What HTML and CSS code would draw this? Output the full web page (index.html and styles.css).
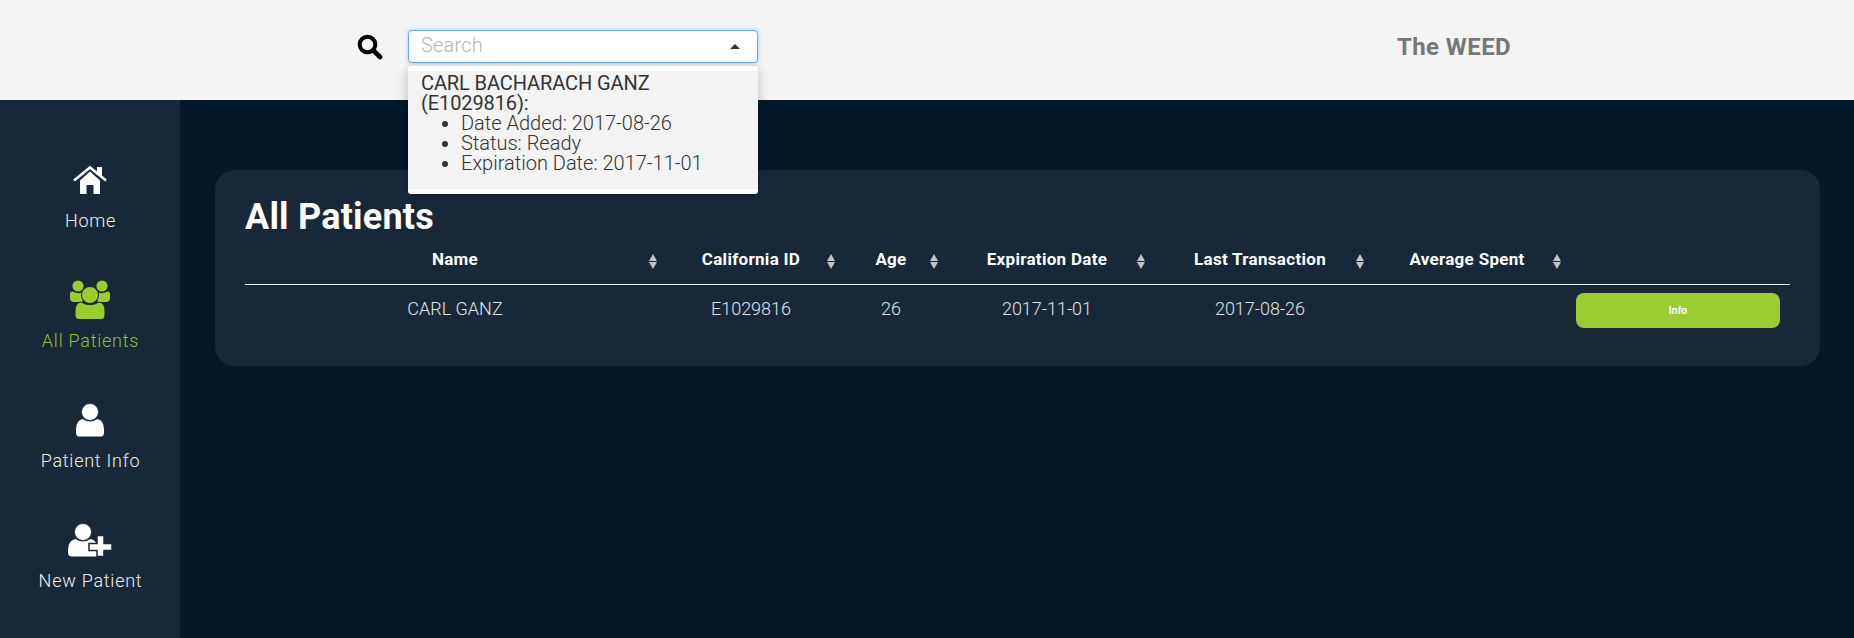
FILE: index.html
```html
<!DOCTYPE html>
<html>
<head>
    <title>The WEED</title>
    <link rel="stylesheet" href="styles.css">
</head>
<body>
    <header class="topbar">
        <svg class="search-icon" viewBox="0 0 26 26" width="26" height="26">
            <circle cx="10.5" cy="10.5" r="7.8" fill="none" stroke="#000" stroke-width="4"/>
            <path d="M16.5 16.5L23 23" stroke="#000" stroke-width="4.6" stroke-linecap="round"/>
        </svg>
        <div class="search-box">
            <div class="search-input">
                <span>Search</span>
                <i class="caret"></i>
            </div>
            <div class="search-menu">
                <div class="search-result">
                    <div class="result-name">CARL BACHARACH GANZ (E1029816):</div>
                    <ul>
                        <li>Date Added: 2017-08-26</li>
                        <li>Status: Ready</li>
                        <li>Expiration Date: 2017-11-01</li>
                    </ul>
                </div>
            </div>
        </div>
        <div class="brand">The WEED</div>
    </header>
    <div class="page">
        <nav class="sidebar">
            <a class="nav-item">
                <svg viewBox="0 0 34 28" width="34" height="28">
                    <path d="M7 14.5L17 5.5L27 14.5V28H20.5V19H13.5V28H7Z" fill="#fff"/>
                    <path d="M1 14.5L17 1.5L33 14.5" fill="none" stroke="#fff" stroke-width="2.6"/>
                    <path d="M24 1H29V10.5L24 6.5Z" fill="#fff"/>
                </svg>
                <span>Home</span>
            </a>
            <a class="nav-item active">
                <svg viewBox="0 0 42 40" width="42" height="40">
                    <circle cx="9" cy="6" r="5.6" fill="#9acd32"/>
                    <circle cx="33" cy="6" r="5.6" fill="#9acd32"/>
                    <path d="M1 14Q1 11.500 3.500 11.500Q9 14.500 13 12.500L13.500 22H5Q1 22 1 18Z" fill="#9acd32"/>
                    <path d="M41 14Q41 11.500 38.500 11.500Q33 14.500 29 12.500L28.500 22H37Q41 22 41 18Z" fill="#9acd32"/>
                    <path d="M6 31Q6 23 12 22Q21 27.500 30 22Q36 23 36 31V35Q36 39.500 32 39.500H10Q6 39.500 6 35Z" fill="#9acd32" stroke="#192838" stroke-width="1"/>
                    <circle cx="21" cy="15" r="8.500" fill="#9acd32" stroke="#192838" stroke-width="1"/>
                </svg>
                <span>All Patients</span>
            </a>
            <a class="nav-item">
                <svg viewBox="0 0 28 33" width="28" height="33">
                    <path d="M0 26Q0 17 6.500 15.500Q14 20.500 21.500 15.500Q28 17 28 26V29Q28 33 25 33H3Q0 33 0 29Z" fill="#fff"/>
                    <circle cx="14" cy="8.500" r="8.500" fill="#fff" stroke="#192838" stroke-width="0.8"/>
                </svg>
                <span>Patient Info</span>
            </a>
            <a class="nav-item">
                <svg viewBox="0 0 46 33" width="46" height="33">
                    <path d="M1 26Q1 17 8.500 15.500Q16 20.500 23.500 15.500Q30 17 30 24V33H5Q1 33 1 29Z" fill="#fff"/>
                    <circle cx="16" cy="8.500" r="8.500" fill="#fff" stroke="#192838" stroke-width="0.8"/>
                    <path d="M30 12H37V20H45V27H37V33H30V27H22V20H30Z" fill="#fff" stroke="#192838" stroke-width="1.500"/>
                </svg>
                <span>New Patient</span>
            </a>
        </nav>
        <main class="content">
            <section class="card">
                <h1>All Patients</h1>
                <table class="patients">
                    <colgroup>
                        <col class="col-name">
                        <col class="col-id">
                        <col class="col-age">
                        <col class="col-exp">
                        <col class="col-last">
                        <col class="col-avg">
                        <col>
                    </colgroup>
                    <thead>
                        <tr>
                            <th class="sortable">Name</th>
                            <th class="sortable">California ID</th>
                            <th class="sortable">Age</th>
                            <th class="sortable">Expiration Date</th>
                            <th class="sortable">Last Transaction</th>
                            <th class="sortable">Average Spent</th>
                            <th></th>
                        </tr>
                    </thead>
                    <tbody>
                        <tr>
                            <td>CARL GANZ</td>
                            <td>E1029816</td>
                            <td>26</td>
                            <td>2017-11-01</td>
                            <td>2017-08-26</td>
                            <td></td>
                            <td class="action"><button class="info-btn">Info</button></td>
                        </tr>
                    </tbody>
                </table>
            </section>
        </main>
    </div>
</body>
</html>
```

FILE: styles.css
```css
html, body {
    height: 100%;
}
body {
    margin: 0;
    font-family: Roboto, "Noto Sans", sans-serif;
    font-weight: 300;
    background-color: #041827;
    color: #ddd;
    overflow: hidden;
}

/* top bar */
.topbar {
    height: 100px;
    background-color: #f4f4f4;
    display: flex;
    align-items: center;
    padding-left: 357px;
    position: relative;
    z-index: 2;
}
.search-icon {
    margin-right: 25px;
    margin-top: -6px;
}
.search-box {
    width: 350px;
    position: relative;
    margin-top: -7px;
}
.search-input {
    height: 33px;
    box-sizing: border-box;
    background-color: #fff;
    border: 1px solid #66afe9;
    border-radius: 4px;
    box-shadow: 0 0 4px rgba(102, 175, 233, 0.6);
    padding: 0 12px 3px;
    display: flex;
    align-items: center;
    justify-content: space-between;
    font-size: 20px;
    letter-spacing: 0.2px;
    color: #b5b5b5;
}
.caret {
    width: 0;
    height: 0;
    border-left: 5px solid transparent;
    border-right: 5px solid transparent;
    border-bottom: 5px solid #333;
    margin-right: 5px;
    margin-top: 3px;
}
.search-menu {
    position: absolute;
    top: 36px;
    left: 0;
    right: 0;
    background-color: #fff;
    border-radius: 3px;
    padding: 5px 0;
    box-shadow: 0 3px 12px rgba(0, 0, 0, 0.25);
}
.search-result {
    background-color: #f3f3f3;
    color: #333;
    font-size: 20px;
    line-height: 20px;
    padding: 2px 13px 16px;
}
.search-result ul {
    margin: 0;
    padding-left: 40px;
}
.result-name {
    width: 270px;
    font-weight: 400;
    letter-spacing: -0.1px;
}
.brand {
    position: absolute;
    left: 1397px;
    width: 114px;
    top: 33px;
    text-align: center;
    font-size: 24px;
    font-weight: 700;
    letter-spacing: 0.4px;
    color: #777;
    white-space: nowrap;
}

/* page */
.page {
    display: flex;
    height: 538px;
}
.sidebar {
    width: 180px;
    flex-shrink: 0;
    background-color: #192838;
    padding-top: 60px;
    box-sizing: border-box;
}
.nav-item {
    height: 120px;
    display: flex;
    flex-direction: column;
    align-items: center;
    color: #f0f0f0;
    font-size: 18px;
    letter-spacing: 0.75px;
    text-align: center;
}
.nav-item span {
    padding-left: 1px;
}
.nav-item svg {
    height: 40px;
    margin-bottom: 10px;
}
.nav-item.active {
    color: #8cc02f;
}

.content {
    flex: 1;
    padding: 70px 34px 0 35px;
}
.card {
    background-color: #192838;
    border-radius: 20px;
    padding: 27px 30px 0 30px;
    height: 196px;
    box-sizing: border-box;
}
h1 {
    margin: 0;
    font-size: 36px;
    line-height: 40px;
    font-weight: 700;
    letter-spacing: 0.2px;
    color: #fff;
}

/* table */
.patients {
    width: 100%;
    table-layout: fixed;
    border-collapse: collapse;
    font-size: 18px;
}
.col-name { width: 420px; }
.col-id { width: 172px; }
.col-age { width: 108px; }
.col-exp { width: 204px; }
.col-last { width: 222px; }
.col-avg { width: 192px; }

.patients th {
    height: 47px;
    padding: 0 0 2px;
    box-sizing: border-box;
    border-bottom: 1px solid #eee;
    color: #fff;
    font-size: 17px;
    font-weight: 700;
    letter-spacing: 0.3px;
    text-align: center;
    position: relative;
    white-space: nowrap;
    --arrow-right: 8px;
}
.patients th:nth-child(2),
.patients th:nth-child(6) { --arrow-right: 2px; }
.patients th:nth-child(3),
.patients th:nth-child(5) { --arrow-right: 7px; }
.patients th:nth-child(4) { --arrow-right: 4px; }

.sortable::before,
.sortable::after {
    content: "";
    position: absolute;
    right: var(--arrow-right);
    width: 0;
    height: 0;
    border-left: 4px solid transparent;
    border-right: 4px solid transparent;
}
.sortable::before {
    top: 17px;
    border-bottom: 7px solid #c4c4c4;
}
.sortable::after {
    top: 25px;
    border-top: 7px solid #c4c4c4;
}
.patients td {
    height: 50px;
    padding: 12px 0 0;
    box-sizing: border-box;
    text-align: center;
    vertical-align: top;
    line-height: 24px;
    color: #e2e2e2;
}
.patients td.action {
    padding: 8px 10px 0 13px;
}
.info-btn {
    display: block;
    width: 100%;
    height: 35px;
    background-color: #9acd32;
    border: none;
    border-radius: 8px;
    color: #fff;
    font-family: "Liberation Sans", Arial, sans-serif;
    font-size: 10px;
    font-weight: 700;
}
```
